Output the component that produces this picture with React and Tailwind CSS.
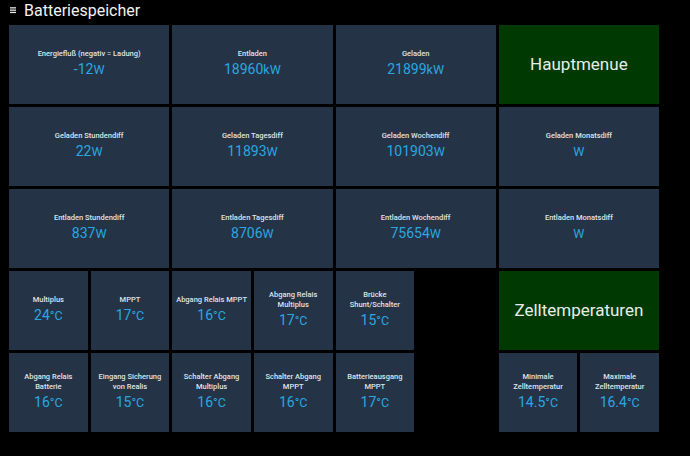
import React from "react";

const power = [
  { label: "Energiefluß (negativ = Ladung)", value: "-12", unit: "W" },
  { label: "Entladen", value: "18960", unit: "kW" },
  { label: "Geladen", value: "21899", unit: "kW" },
  { nav: "Hauptmenue" },
  { label: "Geladen Stundendiff", value: "22", unit: "W" },
  { label: "Geladen Tagesdiff", value: "11893", unit: "W" },
  { label: "Geladen Wochendiff", value: "101903", unit: "W" },
  { label: "Geladen Monatsdiff", value: "", unit: "W" },
  { label: "Entladen Stundendiff", value: "837", unit: "W" },
  { label: "Entladen Tagesdiff", value: "8706", unit: "W" },
  { label: "Entladen Wochendiff", value: "75654", unit: "W" },
  { label: "Entladen Monatsdiff", value: "", unit: "W" },
];

const temps = [
  { label: ["Multiplus"], value: "24" },
  { label: ["MPPT"], value: "17" },
  { label: ["Abgang Relais MPPT"], value: "16" },
  { label: ["Abgang Relais", "Multiplus"], value: "17" },
  { label: ["Brücke", "Shunt/Schalter"], value: "15" },
];

const temps2 = [
  { label: ["Abgang Relais", "Batterie"], value: "16" },
  { label: ["Eingang Sicherung", "von Realis"], value: "15" },
  { label: ["Schalter Abgang", "Multiplus"], value: "16" },
  { label: ["Schalter Abgang", "MPPT"], value: "16" },
  { label: ["Batterieausgang", "MPPT"], value: "17" },
];

const cells = [
  { label: ["Minimale", "Zelltemperatur"], value: "14.5" },
  { label: ["Maximale", "Zelltemperatur"], value: "16.4" },
];

const Tile = ({ label, value, unit, wide }) => (
  <div
    className={`${wide ? "col-span-2" : ""} bg-[#243446] flex flex-col items-center justify-center text-center`}
  >
    {label.map((l) => (
      <div key={l} className="text-[7.5px] leading-[10px] font-medium text-[#dfe3e8] whitespace-nowrap">
        {l}
      </div>
    ))}
    <div className="leading-[20px] text-[#2ba6e1] whitespace-nowrap">
      <span className="text-[14px]">{value}</span>
      <span className="text-[12.5px]">{unit}</span>
    </div>
  </div>
);

const NavTile = ({ title }) => (
  <div className="col-span-2 bg-[#003a02] flex items-center justify-center text-[17px] text-[#e8ece8]">
    {title}
  </div>
);

export default function App() {
  return (
    <div className="w-[690px] h-[456px] bg-black font-['Roboto',_'Liberation_Sans',_sans-serif] overflow-hidden">
      <div className="h-[25px] flex items-start pt-[3px] pl-[10px] gap-[7px] text-[#f2f2f2]">
        <svg width="7" height="16" viewBox="0 0 7 16" className="shrink-0">
          <rect x="0" y="4.2" width="6" height="1.3" fill="#e8e8e8" />
          <rect x="0" y="6.5" width="6" height="1.3" fill="#e8e8e8" />
          <rect x="0" y="8.8" width="6" height="1.3" fill="#e8e8e8" />
        </svg>
        <span className="text-[16px] leading-4">Batteriespeicher</span>
      </div>
      <div className="ml-[9px] w-[650px] grid grid-cols-8 auto-rows-[79px] gap-[3px]">
        {power.map((p, i) =>
          p.nav ? (
            <NavTile key={i} title={p.nav} />
          ) : (
            <Tile key={i} wide label={[p.label]} value={p.value} unit={p.unit} />
          )
        )}
        {temps.map((t, i) => (
          <Tile key={"a" + i} label={t.label} value={t.value} unit="°C" />
        ))}
        <div />
        <NavTile title="Zelltemperaturen" />
        {temps2.map((t, i) => (
          <Tile key={"b" + i} label={t.label} value={t.value} unit="°C" />
        ))}
        <div />
        {cells.map((t, i) => (
          <Tile key={"c" + i} label={t.label} value={t.value} unit="°C" />
        ))}
      </div>
    </div>
  );
}
